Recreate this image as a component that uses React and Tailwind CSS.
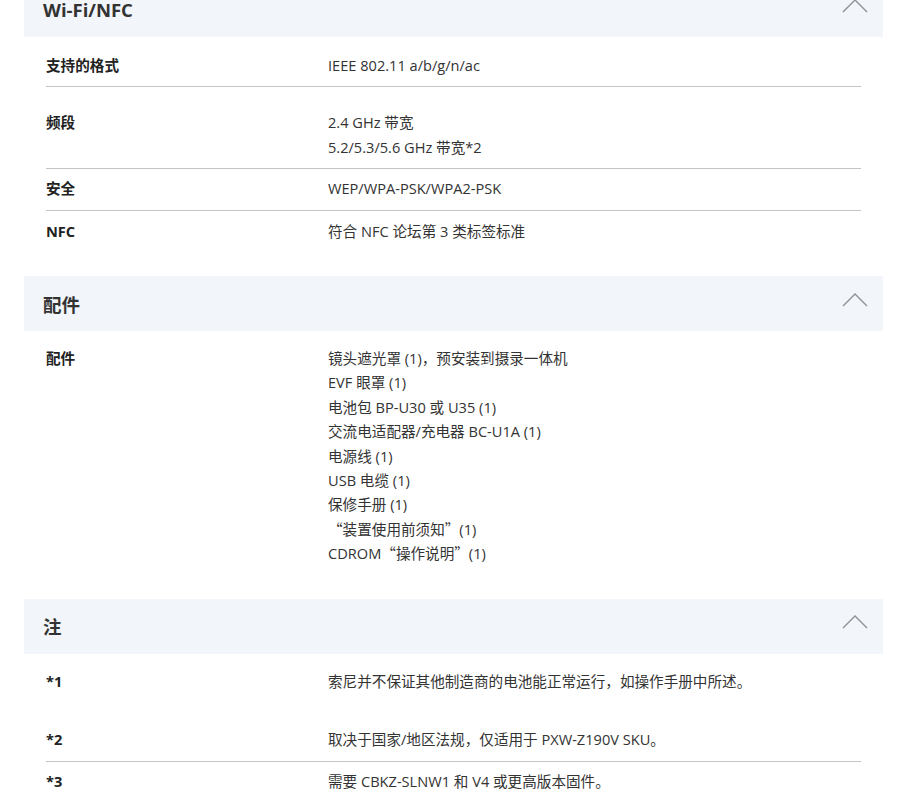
import React from "react";

const Chevron = () => (
  <svg width="26" height="15" viewBox="0 0 26 15" fill="none" className="block">
    <polyline points="1,14 13,2 25,14" stroke="#8a9199" strokeWidth="1.4" fill="none" />
  </svg>
);

const Header = ({ title, className = "", titlePad = "pt-[3px]" }) => (
  <div className={`flex h-[55px] items-center justify-between bg-[#f2f5f9] pl-[19px] pr-[15px] ${className}`}>
    <h2 className={`${titlePad} text-[18.5px] font-bold leading-none text-[#333]`}>{title}</h2>
    <div className="-mt-[9px]">
      <Chevron />
    </div>
  </div>
);

const Row = ({ label, children, pad, border }) => (
  <div className={`flex text-[14.6px] leading-[24.4px] text-[#333] ${pad} ${border ? "border-b border-[#c4c4c4]" : ""}`}>
    <div className="w-[282px] shrink-0 font-bold text-[#222]">{label}</div>
    <div className="flex flex-col">{children}</div>
  </div>
);

const Q = ({ children }) => (
  <span style={{ fontFamily: '"Noto Sans CJK SC", sans-serif' }}>{children}</span>
);

export default function App() {
  return (
    <div
      className="min-h-[806px] overflow-hidden bg-white"
      style={{ fontFamily: '"Open Sans", "Noto Sans CJK SC", sans-serif' }}
    >
      <div className="mx-[24px] w-[859px]">
        <Header title="Wi-Fi/NFC" className="-mt-[18px]" titlePad="pt-[1px]" />
        <div className="mx-[22px] pb-[33px]">
          <Row label="支持的格式" pad="pt-[16px] pb-[9px]" border>
            <span>IEEE 802.11 a/b/g/n/ac</span>
          </Row>
          <Row label="频段" pad="pt-[23px] pb-[9px]" border>
            <span>2.4 GHz 带宽</span>
            <span>5.2/5.3/5.6 GHz 带宽*2</span>
          </Row>
          <Row label="安全" pad="pt-[7px] pb-[9px]" border>
            <span>WEP/WPA-PSK/WPA2-PSK</span>
          </Row>
          <Row label="NFC" pad="pt-[8px]">
            <span>符合 NFC 论坛第 3 类标签标准</span>
          </Row>
        </div>

        <Header title="配件" />
        <div className="mx-[22px] pb-[33px]">
          <Row label="配件" pad="pt-[15px]">
            <span>镜头遮光罩 (1)，预安装到摄录一体机</span>
            <span>EVF 眼罩 (1)</span>
            <span>电池包 BP-U30 或 U35 (1)</span>
            <span>交流电适配器/充电器 BC-U1A (1)</span>
            <span>电源线 (1)</span>
            <span>USB 电缆 (1)</span>
            <span>保修手册 (1)</span>
            <span>
              <Q>“装置使用前须知”</Q>(1)
            </span>
            <span>
              CDROM<Q>“操作说明”</Q>(1)
            </span>
          </Row>
        </div>

        <Header title="注" />
        <div className="mx-[22px] pb-[20px]">
          <Row label="*1" pad="pt-[15px]">
            <span>索尼并不保证其他制造商的电池能正常运行，如操作手册中所述。</span>
          </Row>
          <Row label="*2" pad="pt-[34px] pb-[9px]" border>
            <span>取决于国家/地区法规，仅适用于 PXW-Z190V SKU。</span>
          </Row>
          <Row label="*3" pad="pt-[7px]">
            <span>需要 CBKZ-SLNW1 和 V4 或更高版本固件。</span>
          </Row>
        </div>
      </div>
    </div>
  );
}
